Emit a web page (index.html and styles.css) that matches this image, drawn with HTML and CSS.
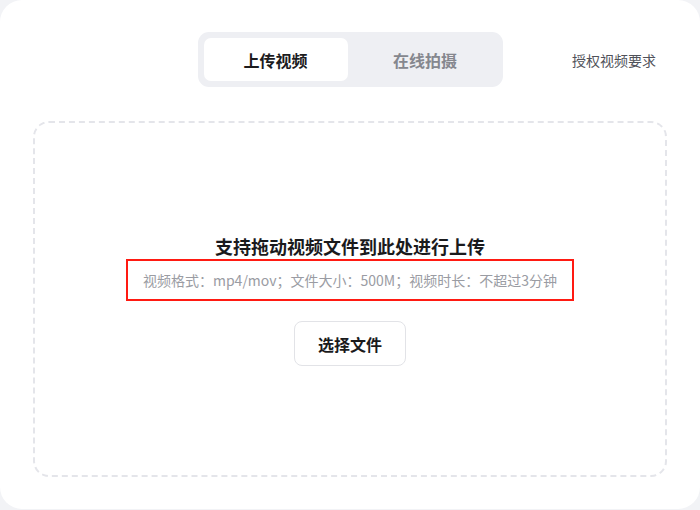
FILE: index.html
```html
<!DOCTYPE html>
<html lang="zh-CN">
<head>
<meta charset="utf-8">
<title>上传视频</title>
<link rel="stylesheet" href="styles.css">
</head>
<body>
<div class="card">
  <div class="header">
    <div class="spacer"></div>
    <div class="tabs">
      <div class="tab active">上传视频</div>
      <div class="tab">在线拍摄</div>
    </div>
    <div class="side"><a class="req">授权视频要求</a></div>
  </div>
  <div class="drop">
    <div class="title">支持拖动视频文件到此处进行上传</div>
    <div class="hint">视频格式：mp4/mov；文件大小：500M；视频时长：不超过3分钟</div>
    <button class="btn">选择文件</button>
  </div>
</div>
</body>
</html>
```
FILE: styles.css
```css
* { box-sizing: border-box; }
html, body { margin: 0; padding: 0; }
body {
  background: #f2f3f6;
  font-family: "Noto Sans CJK SC", "Noto Sans", sans-serif;
  width: 700px;
  height: 510px;
}
.card {
  width: 700px;
  height: 509px;
  background: #ffffff;
  border-radius: 22px;
  padding: 32px 33px 32px 33px;
  display: flex;
  flex-direction: column;
}
.header {
  display: grid;
  grid-template-columns: 1fr auto 1fr;
  align-items: center;
  height: 55px;
}
.tabs {
  display: flex;
  background: #eeeff3;
  border-radius: 11px;
  padding: 6px;
  width: 305px;
  height: 55px;
}
.tab {
  flex: 1;
  display: flex;
  align-items: center;
  justify-content: center;
  font-size: 16px;
  font-weight: 700;
  color: #85878e;
  border-radius: 7px;
  padding-left: 6px;
}
.tab.active {
  background: #ffffff;
  color: #1c1c1e;
  flex: 0 0 144px;
  padding-left: 0;
}
.side {
  display: flex;
  justify-content: flex-end;
  padding-right: 11px;
}
.req {
  font-size: 14px;
  color: #50525a;
  line-height: 20px;
}
.drop {
  margin-top: 34px;
  height: 356px;
  border: 2px dashed #e4e5ea;
  border-radius: 16px;
  display: flex;
  flex-direction: column;
  align-items: center;
  justify-content: center;
  padding-top: 2px;
}
.title {
  font-size: 18px;
  font-weight: 700;
  color: #1a1a1c;
  line-height: 24px;
}
.hint {
  margin-top: 1px;
  border: 2px solid #ff1a12;
  padding: 8px 15px 8px 15px;
  font-size: 14px;
  line-height: 22px;
  color: #9a9ca3;
}
.btn {
  margin-top: 20px;
  width: 112px;
  height: 45px;
  background: #ffffff;
  border: 1px solid #e2e3e7;
  border-radius: 8px;
  font-family: inherit;
  font-size: 16px;
  font-weight: 700;
  color: #1a1a1c;
}
```
